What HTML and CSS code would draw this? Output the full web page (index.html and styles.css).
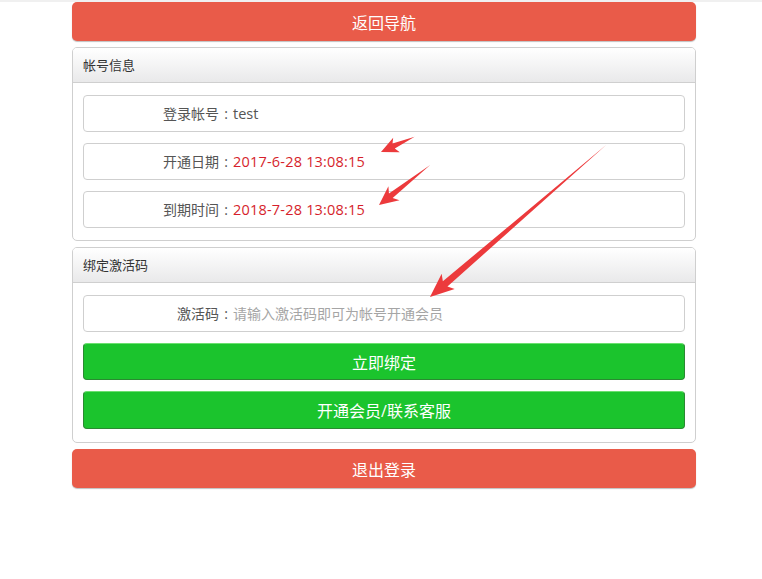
FILE: index.html
```html
<!DOCTYPE html>
<html lang="zh-CN">
<head>
<meta charset="utf-8">
<title>帐号信息</title>
<link rel="stylesheet" href="styles.css">
</head>
<body>
<div class="topline"></div>
<main class="wrap">
  <a class="btn btn-red">返回导航</a>
  <section class="panel">
    <div class="panel-head">帐号信息</div>
    <div class="panel-body">
      <div class="row"><span class="label">登录帐号<span class="colon">:</span></span><span class="val">test</span></div>
      <div class="row"><span class="label">开通日期<span class="colon">:</span></span><span class="val red">2017-6-28 13:08:15</span></div>
      <div class="row"><span class="label">到期时间<span class="colon">:</span></span><span class="val red">2018-7-28 13:08:15</span></div>
    </div>
  </section>
  <section class="panel">
    <div class="panel-head">绑定激活码</div>
    <div class="panel-body bind">
      <div class="row"><span class="label">激活码<span class="colon">:</span></span><span class="val ph">请输入激活码即可为帐号开通会员</span></div>
      <a class="btn btn-green">立即绑定</a>
      <a class="btn btn-green">开通会员/联系客服</a>
    </div>
  </section>
  <a class="btn btn-red">退出登录</a>
</main>
<svg class="arrows" width="762" height="579" viewBox="0 0 762 579">
  <g fill="#ec3a3c">
    <g transform="translate(381 152) rotate(155.6)">
      <polygon points="0,0 -17,-8 -14,-2.5 -37,0 -14,3 -17,8"/>
    </g>
    <g transform="translate(379 205) rotate(141.9)">
      <polygon points="0,0 -19,-9 -15,-3 -65,0 -15,3 -19,9"/>
    </g>
    <g transform="translate(430 297) rotate(139.2)">
      <polygon points="0,0 -24,-10 -20,-3.5 -233,0 -20,3.5 -24,10"/>
    </g>
  </g>
</svg>
</body>
</html>
```
FILE: styles.css
```css
html, body {
  margin: 0;
  padding: 0;
  background: #fff;
}
body {
  font-family: "Open Sans", "Noto Sans CJK SC", sans-serif;
  color: #555;
  position: relative;
  width: 762px;
  height: 579px;
  overflow: hidden;
}
.topline {
  height: 2px;
  background: #f0f0f0;
}
.wrap {
  margin-left: 72px;
  width: 624px;
  display: flex;
  flex-direction: column;
  gap: 6px;
}
.btn {
  display: flex;
  align-items: center;
  justify-content: center;
  box-sizing: border-box;
  color: #fff;
  font-size: 16px;
  border-radius: 5px;
  text-decoration: none;
}
.btn-red {
  height: 39px;
  background: #e95b49;
  box-shadow: 0 1px 1px rgba(0,0,0,0.25);
}
.btn-green {
  height: 37px;
  background: #1bc42d;
  border: 1px solid #2a8a31;
  border-top-color: #6be06f;
  border-radius: 4px;
}
.btn-green + .btn-green {
  height: 38px;
}
.panel {
  border: 1px solid #cfcfcf;
  border-radius: 5px;
  overflow: hidden;
}
.panel-head {
  height: 34px;
  line-height: 34px;
  padding-left: 10px;
  font-size: 13px;
  color: #333;
  background: linear-gradient(#ffffff, #e9e9ea);
  border-bottom: 1px solid #cfcfcf;
}
.panel-body {
  padding: 12px 10px;
  display: flex;
  flex-direction: column;
  gap: 11px;
}
.panel-body.bind {
  padding-bottom: 13px;
}
.row {
  height: 37px;
  box-sizing: border-box;
  border: 1px solid #cfcfcf;
  border-radius: 4px;
  display: flex;
  align-items: center;
  font-size: 14px;
  padding-bottom: 1px;
}
.label {
  width: 149px;
  text-align: right;
  color: #555;
}
.colon {
  display: inline-block;
  width: 14px;
  text-align: center;
}
.val {
  color: #555;
  font-size: 14.5px;
}
.val.red {
  color: #d61f2c;
  letter-spacing: 0.2px;
}
.val.ph {
  color: #a5a5a5;
  font-size: 14px;
}
.arrows {
  position: absolute;
  left: 0;
  top: 0;
  pointer-events: none;
}
```
